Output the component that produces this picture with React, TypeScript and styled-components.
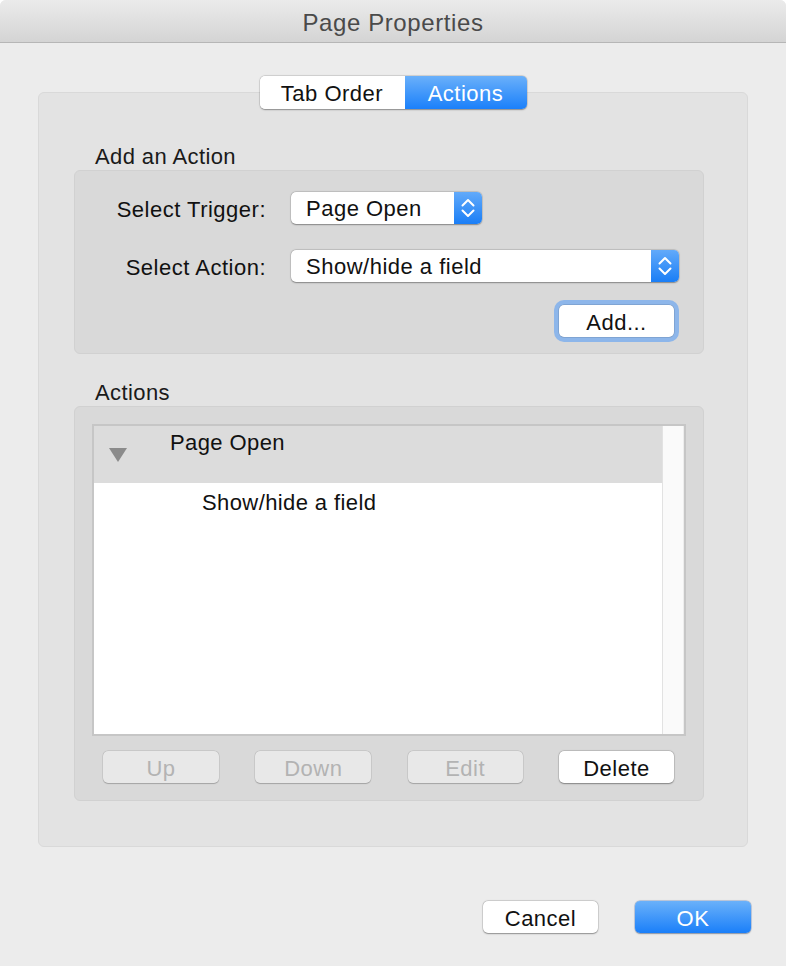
import React from "react";
import styled, { createGlobalStyle, css } from "styled-components";

const GlobalStyle = createGlobalStyle`
  html, body { margin: 0; padding: 0; background: #ffffff; }
  body {
    font-family: "Liberation Sans", Arial, Helvetica, sans-serif;
    -webkit-font-smoothing: antialiased;
  }
  * { box-sizing: border-box; }
`;

const Window = styled.div`
  width: 786px;
  height: 966px;
  background: #ececec;
  display: flex;
  flex-direction: column;
  border-radius: 6px 6px 0 0;
  overflow: hidden;
`;

const TitleBar = styled.header`
  flex: none;
  height: 43px;
  display: flex;
  justify-content: center;
  align-items: flex-start;
  padding-top: 9px;
  background: linear-gradient(#ebebeb, #d4d4d4);
  border-bottom: 1px solid #b6b6b6;
  font-size: 24px;
  line-height: 28px;
  letter-spacing: 0.6px;
  color: #4a4a4a;
`;

const Body = styled.main`
  display: flex;
  flex-direction: column;
  padding: 33px 38px 0;
`;

const SegmentBar = styled.div`
  display: flex;
  justify-content: center;
  position: relative;
  z-index: 1;
  margin-bottom: -17px;
`;

const Segmented = styled.div`
  display: flex;
  height: 33px;
  border-radius: 5px;
  overflow: hidden;
  box-shadow: 0 0.5px 1.5px rgba(0, 0, 0, 0.35), 0 0 0 0.5px rgba(0, 0, 0, 0.12);
`;

const Segment = styled.div<{ $active?: boolean; $w: number }>`
  width: ${(p) => p.$w}px;
  height: 33px;
  display: flex;
  align-items: center;
  justify-content: center;
  padding-top: 3px;
  font-size: 22px;
  letter-spacing: 0.5px;
  ${(p) =>
    p.$active
      ? css`
          background: linear-gradient(#6ab0fa, #1b80fa);
          color: #ffffff;
        `
      : css`
          background: #ffffff;
          color: #111111;
        `}
`;

const Panel = styled.section`
  display: flex;
  flex-direction: column;
  background: #e3e3e3;
  border: 1px solid #d9d9d9;
  border-radius: 6px;
  padding: 51px 43px 45px 35px;
`;

const GroupLabel = styled.div<{ $top?: number }>`
  font-size: 22px;
  line-height: 26px;
  letter-spacing: 0.4px;
  color: #1a1a1a;
  padding-left: 21px;
  margin-top: ${(p) => p.$top ?? 0}px;
`;

const Group = styled.div<{ $pad: string }>`
  display: flex;
  flex-direction: column;
  background: #d9d9d9;
  border: 1px solid #d1d1d1;
  border-radius: 6px;
  padding: ${(p) => p.$pad};
`;

const FormRow = styled.div<{ $top?: number }>`
  display: flex;
  align-items: center;
  height: 32px;
  gap: 25px;
  margin-top: ${(p) => p.$top ?? 0}px;
`;

const FieldLabel = styled.div`
  width: 191px;
  text-align: right;
  padding-top: 4px;
  font-size: 22px;
  letter-spacing: 0.5px;
  color: #111111;
`;

const Popup = styled.div<{ $w: number }>`
  width: ${(p) => p.$w}px;
  height: 32px;
  display: flex;
  background: #ffffff;
  border-radius: 5px;
  overflow: hidden;
  box-shadow: 0 0.5px 1.5px rgba(0, 0, 0, 0.35), 0 0 0 0.5px rgba(0, 0, 0, 0.12);
`;

const PopupText = styled.div`
  flex: 1;
  padding: 2px 0 0 15px;
  font-size: 22px;
  line-height: 30px;
  letter-spacing: 0.5px;
  color: #111111;
`;

const Stepper = styled.div`
  width: 28px;
  height: 32px;
  display: flex;
  align-items: center;
  justify-content: center;
  background: linear-gradient(#62aafa, #1a7ef6);
`;

const ActionRow = styled.div`
  display: flex;
  justify-content: flex-end;
  margin-top: 23px;
  padding-right: 29px;
`;

const ButtonRow = styled.div`
  display: flex;
  justify-content: space-between;
  margin-top: 15px;
  padding: 0 12px 0 11px;
`;

type Variant = "normal" | "disabled" | "primary" | "focused";

const PushButton = styled.div<{ $variant?: Variant; $w?: number }>`
  width: ${(p) => p.$w ?? 116}px;
  height: 32px;
  display: flex;
  align-items: center;
  justify-content: center;
  padding-top: 3px;
  border-radius: 5px;
  font-size: 22px;
  letter-spacing: 0.5px;
  background: #ffffff;
  color: #111111;
  box-shadow: 0 0.5px 1.5px rgba(0, 0, 0, 0.35), 0 0 0 0.5px rgba(0, 0, 0, 0.14);
  ${(p) =>
    p.$variant === "disabled" &&
    css`
      background: #e8e8e8;
      color: #b3b3b3;
      box-shadow: 0 0.5px 1px rgba(0, 0, 0, 0.2), 0 0 0 0.5px rgba(0, 0, 0, 0.1);
    `}
  ${(p) =>
    p.$variant === "primary" &&
    css`
      background: linear-gradient(#6ab1fa, #1a7ff9);
      color: #ffffff;
      box-shadow: 0 0.5px 1.5px rgba(0, 0, 0, 0.3), 0 0 0 0.5px rgba(20, 90, 200, 0.35);
    `}
  ${(p) =>
    p.$variant === "focused" &&
    css`
      box-shadow: 0 0 0 0.5px rgba(0, 0, 0, 0.2), 0 0 0 5px #8db6ea;
    `}
`;

const ListBox = styled.div`
  height: 312px;
  display: flex;
  background: #ffffff;
  border: 2px solid #c6c6c6;
`;

const ListContent = styled.div`
  flex: 1;
  display: flex;
  flex-direction: column;
`;

const HeaderRow = styled.div`
  height: 57px;
  display: flex;
  align-items: flex-start;
  background: #dcdcdc;
  padding: 4px 0 0 15px;
`;

const Disclosure = styled.svg`
  flex: none;
  margin-top: 18px;
  margin-right: 43px;
`;

const RowText = styled.div<{ $indent?: number }>`
  font-size: 22px;
  line-height: 26px;
  letter-spacing: 0.4px;
  color: #111111;
  padding-left: ${(p) => p.$indent ?? 0}px;
`;

const ItemRow = styled.div`
  padding-top: 7px;
`;

const ScrollTrack = styled.div`
  width: 22px;
  background: #fafafa;
  border-left: 1px solid #e2e2e2;
  border-right: 1px solid #ededed;
`;

const Footer = styled.footer`
  display: flex;
  justify-content: flex-end;
  gap: 37px;
  padding: 54px 35px 0 0;
`;

const StepperIcon = () => (
  <svg width="28" height="32" viewBox="0 0 28 32">
    <path
      d="M8.5 13.5 L14 8 L19.5 13.5 M8.5 18.5 L14 24 L19.5 18.5"
      fill="none"
      stroke="#ffffff"
      strokeWidth="2"
      strokeLinecap="round"
      strokeLinejoin="round"
    />
  </svg>
);

export default function App() {
  return (
    <>
      <GlobalStyle />
      <Window>
        <TitleBar>Page Properties</TitleBar>
        <Body>
          <SegmentBar>
            <Segmented>
              <Segment $w={145}>Tab Order</Segment>
              <Segment $w={122} $active>
                Actions
              </Segment>
            </Segmented>
          </SegmentBar>
          <Panel>
            <GroupLabel>Add an Action</GroupLabel>
            <Group $pad="21px 0 16px">
              <FormRow>
                <FieldLabel>Select Trigger:</FieldLabel>
                <Popup $w={191}>
                  <PopupText>Page Open</PopupText>
                  <Stepper>
                    <StepperIcon />
                  </Stepper>
                </Popup>
              </FormRow>
              <FormRow $top={26}>
                <FieldLabel>Select Action:</FieldLabel>
                <Popup $w={388}>
                  <PopupText>Show/hide a field</PopupText>
                  <Stepper>
                    <StepperIcon />
                  </Stepper>
                </Popup>
              </FormRow>
              <ActionRow>
                <PushButton $variant="focused" $w={115}>
                  Add...
                </PushButton>
              </ActionRow>
            </Group>
            <GroupLabel $top={26}>Actions</GroupLabel>
            <Group $pad="17px 17px 17px">
              <ListBox>
                <ListContent>
                  <HeaderRow>
                    <Disclosure width="18" height="14" viewBox="0 0 18 14">
                      <polygon points="0,0 18,0 9,14" fill="#8b8b8b" />
                    </Disclosure>
                    <RowText>Page Open</RowText>
                  </HeaderRow>
                  <ItemRow>
                    <RowText $indent={108}>Show/hide a field</RowText>
                  </ItemRow>
                </ListContent>
                <ScrollTrack />
              </ListBox>
              <ButtonRow>
                <PushButton $variant="disabled">Up</PushButton>
                <PushButton $variant="disabled">Down</PushButton>
                <PushButton $variant="disabled" $w={115}>
                  Edit
                </PushButton>
                <PushButton $w={115}>Delete</PushButton>
              </ButtonRow>
            </Group>
          </Panel>
        </Body>
        <Footer>
          <PushButton $w={115}>Cancel</PushButton>
          <PushButton $variant="primary">OK</PushButton>
        </Footer>
      </Window>
    </>
  );
}
